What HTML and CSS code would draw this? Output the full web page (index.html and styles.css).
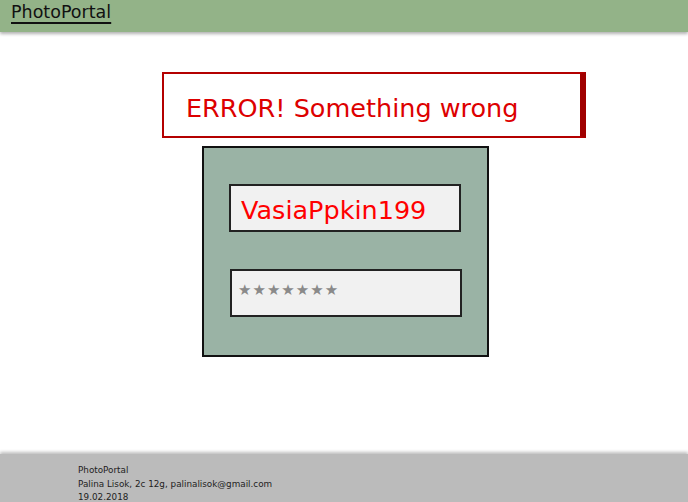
FILE: index.html
```html
<!DOCTYPE html>
<html>
<head>
<meta charset="utf-8">
<link rel="stylesheet" href="styles.css">
</head>
<body>
<header class="top">
  <a class="brand" href="#">PhotoPortal</a>
</header>
<main class="main">
  <div class="error">ERROR! Something wrong</div>
  <form class="login">
    <div class="field field-user">VasiaPpkin199</div>
    <div class="field field-pass">★★★★★★★</div>
  </form>
</main>
<footer class="bottom">
  <div class="foot-text">
    <div>PhotoPortal</div>
    <div>Palina Lisok, 2c 12g, palinalisok@gmail.com</div>
    <div>19.02.2018</div>
  </div>
</footer>
</body>
</html>
```

FILE: styles.css
```css
html, body {
  margin: 0;
  padding: 0;
  height: 100%;
}
body {
  font-family: "DejaVu Sans", sans-serif;
  background: #ffffff;
  display: flex;
  flex-direction: column;
  overflow: hidden;
}
.top {
  box-sizing: border-box;
  height: 32px;
  background: #93b388;
  box-shadow: 0 2px 3px rgba(0,0,0,0.3);
  padding: 2px 0 0 11px;
  position: relative;
  z-index: 1;
}
.brand {
  color: #111;
  font-size: 17.5px;
  line-height: 20px;
  text-decoration: underline;
  text-decoration-thickness: 2px;
  text-underline-offset: 4px;
}
.main {
  flex: 1;
  display: flex;
  flex-direction: column;
  padding-top: 40px;
}
.error {
  box-sizing: border-box;
  margin-left: 162px;
  width: 424px;
  height: 66px;
  border: 2px solid #b40000;
  border-right: 6px solid #a00000;
  color: #dd0000;
  font-size: 25.5px;
  line-height: 30px;
  padding-left: 22px;
  padding-top: 19px;
}
.login {
  box-sizing: border-box;
  margin: 8px 0 0 202px;
  width: 287px;
  height: 211px;
  border: 2px solid #111;
  background: #9ab3a5;
  padding: 36px 0 0 25px;
  display: flex;
  flex-direction: column;
  gap: 37px;
}
.field {
  box-sizing: border-box;
  width: 232px;
  height: 48px;
  background: #f1f1f1;
  border: 2px solid #222;
}
.field-user {
  color: #ff0000;
  font-size: 25.5px;
  line-height: 30px;
  padding: 9px 0 0 10px;
}
.field-pass {
  margin-left: 1px;
  color: #8a8a8a;
  font-size: 15px;
  line-height: 20px;
  padding: 9px 0 0 6px;
  letter-spacing: 1px;
}
.bottom {
  height: 48px;
  background: #bbbbbb;
  box-shadow: 0 -2px 3px rgba(0,0,0,0.25);
}
.foot-text {
  padding: 10px 0 0 78px;
  font-size: 8.8px;
  line-height: 13.5px;
  color: #222;
}
```
